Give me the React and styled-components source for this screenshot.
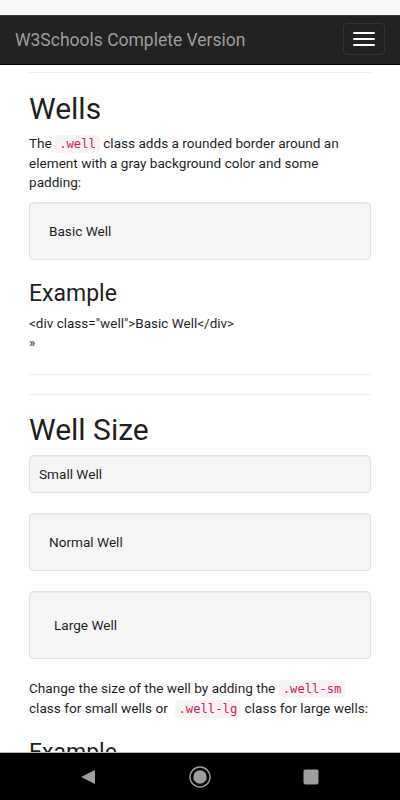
import styled, { createGlobalStyle } from 'styled-components';

const GlobalStyle = createGlobalStyle`
  html, body {
    margin: 0;
    padding: 0;
    background: #fff;
  }
  body {
    font-family: Roboto, "Noto Sans", Arial, sans-serif;
    font-size: 13.6px;
    line-height: 19px;
    color: #1f1f1f;
  }
`;

const Page = styled.div`
  min-height: 800px;
  padding-bottom: 48px;
  box-sizing: border-box;
`;

const StatusStrip = styled.div`
  height: 15px;
  background: #f8f8f8;
`;

const Navbar = styled.nav`
  height: 48px;
  background: #222;
  border-top: 1px solid #3a3a3a;
  border-bottom: 1px solid #080808;
  padding: 0 15px;
  display: flex;
  align-items: center;
  justify-content: space-between;
`;

const Brand = styled.span`
  font-size: 17.5px;
  color: #9d9d9d;
  line-height: 20px;
`;

const Toggle = styled.button`
  width: 42px;
  height: 32px;
  padding: 0;
  background: transparent;
  border: 1px solid #333;
  border-radius: 4px;
  display: flex;
  flex-direction: column;
  align-items: center;
  justify-content: center;
  gap: 4px;
  margin-top: -2px;
`;

const Bar = styled.span`
  display: block;
  width: 22px;
  height: 2px;
  border-radius: 1px;
  background: #fff;
`;

const Main = styled.main`
  padding: 0 29px;
`;

const Rule = styled.hr`
  border: 0;
  border-top: 1px solid #eee;
  margin: ${(p) => p.$top}px 0 ${(p) => p.$bottom}px;
`;

const Heading = styled.h1`
  font-size: 30px;
  font-weight: 400;
  line-height: 1.1;
  color: #1f1f1f;
  margin: 0 0 9px;
`;

const SubHeading = styled.h2`
  font-size: 23px;
  font-weight: 400;
  line-height: 1.1;
  color: #1f1f1f;
  margin: 21px 0 8px;
`;

const Para = styled.p`
  margin: 0 0 10px;
`;

const Code = styled.code`
  font-family: "DejaVu Sans Mono", "Liberation Mono", monospace;
  font-size: 12.2px;
  padding: 2px 4px;
  color: #c7254e;
  background: #f9f2f4;
  border-radius: 4px;
`;

const paddings = { sm: 9, md: 19, lg: 24 };

const Well = styled.div`
  background: #f5f5f5;
  border: 1px solid #e3e3e3;
  border-radius: 4px;
  box-shadow: inset 0 1px 1px rgba(0, 0, 0, 0.05);
  padding: ${(p) => paddings[p.$size || 'md']}px;
  line-height: 18px;
  margin-bottom: 20px;
`;

const ExampleText = styled.div`
  font-size: 13.5px;
  line-height: 19px;
`;

const SystemBar = styled.div`
  position: fixed;
  left: 0;
  right: 0;
  bottom: 0;
  height: 47px;
  background: #000;
  border-top: 1px solid #b8b8b8;
  display: grid;
  grid-template-columns: repeat(3, 1fr);
  align-items: center;
  justify-items: center;
`;

const NavIcon = styled.svg`
  display: block;
  margin-left: ${(p) => p.$shift || 0}px;
`;

export default function App() {
  return (
    <Page>
      <GlobalStyle />
      <StatusStrip />
      <Navbar>
        <Brand>W3Schools Complete Version</Brand>
        <Toggle aria-label="menu">
          <Bar />
          <Bar />
          <Bar />
        </Toggle>
      </Navbar>

      <Main>
        <Rule $top={7} $bottom={19} />
        <Heading>Wells</Heading>
        <Para>
          The <Code>.well</Code> class adds a rounded border around an element
          with a gray background color and some padding:
        </Para>
        <Well>Basic Well</Well>

        <SubHeading>Example</SubHeading>
        <ExampleText>
          &lt;div class="well"&gt;Basic Well&lt;/div&gt;
          <br />»
        </ExampleText>

        <Rule $top={22} $bottom={19} />
        <Rule $top={0} $bottom={18} />

        <Heading>Well Size</Heading>
        <Well $size="sm">Small Well</Well>
        <Well>Normal Well</Well>
        <Well $size="lg">Large Well</Well>
        <Para>
          Change the size of the well by adding the <Code>.well-sm</Code> class
          for small wells or&nbsp; <Code>.well-lg</Code> class for large wells:
        </Para>

        <SubHeading>Example</SubHeading>
        <ExampleText>
          &lt;div class="well well-sm"&gt;Small Well&lt;/div&gt;
        </ExampleText>
      </Main>

      <SystemBar>
        <NavIcon width="16" height="16" viewBox="0 0 16 16" $shift={43}>
          <path d="M15 1 L15 15 L1 8 Z" fill="#9e9e9e" />
        </NavIcon>
        <NavIcon width="24" height="24" viewBox="0 0 24 24">
          <circle cx="12" cy="12" r="10" fill="none" stroke="#9e9e9e" strokeWidth="1.4" />
          <circle cx="12" cy="12" r="6.7" fill="#9e9e9e" />
        </NavIcon>
        <NavIcon width="16" height="16" viewBox="0 0 16 16" $shift={-45}>
          <rect x="0.5" y="0.5" width="15" height="15" rx="2" fill="#9e9e9e" />
        </NavIcon>
      </SystemBar>
    </Page>
  );
}
